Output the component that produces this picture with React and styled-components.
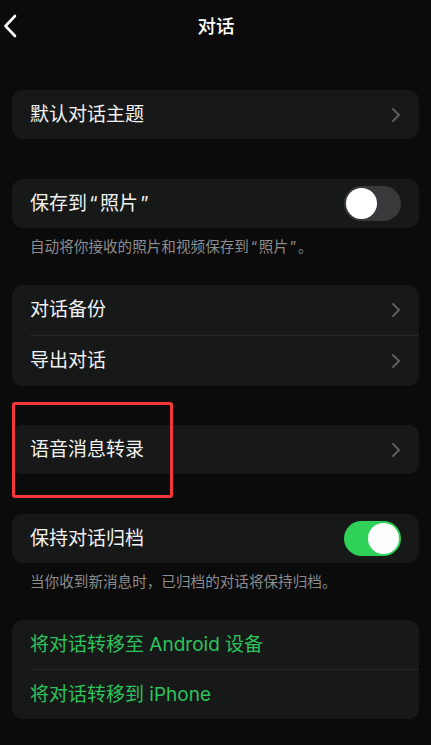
import styled, { createGlobalStyle } from "styled-components";

const GlobalStyle = createGlobalStyle`
  body {
    margin: 0;
    background: #0b0b0b;
    font-family: "Inter", "Noto Sans CJK SC", sans-serif;
    -webkit-font-smoothing: antialiased;
  }
`;

const BackIcon = () => (
  <svg width="14" height="24" viewBox="0 0 14 24" fill="none">
    <path d="M12 2 L2.5 12 L12 22" stroke="#fff" strokeWidth="2.6" strokeLinecap="round" strokeLinejoin="round" />
  </svg>
);

const Chevron = () => (
  <svg width="10" height="16" viewBox="0 0 10 16" fill="none">
    <path d="M2 2 L8 8 L2 14" stroke="#5b5d5f" strokeWidth="2" strokeLinecap="round" strokeLinejoin="round" />
  </svg>
);

export default function App() {
  return (
    <>
      <GlobalStyle />
      <Screen>
        <Header>
          <Back>
            <BackIcon />
          </Back>
          <Title>对话</Title>
        </Header>

        <Card $top={38}>
          <Row>
            <Label>默认对话主题</Label>
            <Chevron />
          </Row>
        </Card>

        <Card $top={40}>
          <Row>
            <Label>
              保存到<Quote>“</Quote>照片<Quote>”</Quote>
            </Label>
            <Toggle />
          </Row>
        </Card>
        <Note>
          自动将你接收的照片和视频保存到<Quote>“</Quote>照片<Quote>”</Quote>。
        </Note>

        <Card $top={28}>
          <Row $tall>
            <Label>对话备份</Label>
            <Chevron />
          </Row>
          <Divider />
          <Row $tall>
            <Label>导出对话</Label>
            <Chevron />
          </Row>
        </Card>

        <Highlighted>
          <Card $top={39}>
            <Row>
              <Label>语音消息转录</Label>
              <Chevron />
            </Row>
          </Card>
          <Marker />
        </Highlighted>

        <Card $top={40}>
          <Row>
            <Label>保持对话归档</Label>
            <Toggle $on />
          </Row>
        </Card>
        <Note>当你收到新消息时，已归档的对话将保持归档。</Note>

        <Card $top={28}>
          <Row>
            <Label $green>将对话转移至 Android 设备</Label>
          </Row>
          <Divider />
          <Row>
            <Label $green>将对话转移到 iPhone</Label>
          </Row>
        </Card>
      </Screen>
    </>
  );
}

const Screen = styled.div`
  width: 431px;
  min-height: 745px;
  box-sizing: border-box;
  padding: 0 12px 26px;
  display: flex;
  flex-direction: column;
`;

const Header = styled.div`
  position: relative;
  height: 52px;
  display: flex;
  align-items: center;
  justify-content: center;
`;

const Back = styled.div`
  position: absolute;
  left: -9px;
  top: 14px;
  display: flex;
`;

const Title = styled.div`
  color: #fff;
  font-size: 18.5px;
  font-weight: 500;
  padding: 0 0 2px 1px;
`;

const Card = styled.div`
  margin-top: ${(p) => p.$top}px;
  background: #171918;
  border-radius: 11px;
  display: flex;
  flex-direction: column;
`;

const Row = styled.div`
  height: ${(p) => (p.$tall ? 50 : 49)}px;
  display: flex;
  align-items: center;
  justify-content: space-between;
  padding: 0 18px;
`;

const Label = styled.span`
  color: ${(p) => (p.$green ? "#2dc25c" : "#f2f2f2")};
  font-size: 19px;
  line-height: 24px;
`;

const Quote = styled.span`
  padding: 0 0.12em;
`;

const Divider = styled.div`
  height: 1px;
  margin-left: 18px;
  background: #262828;
`;

const Note = styled.div`
  padding: 9px 18px 0;
  color: #8b8c8e;
  font-size: 14.6px;
  line-height: 20px;
`;

const Toggle = styled.div`
  position: relative;
  width: 57px;
  height: 35px;
  border-radius: 18px;
  background: ${(p) => (p.$on ? "#30d158" : "#39393c")};

  &::after {
    content: "";
    position: absolute;
    top: 2px;
    left: ${(p) => (p.$on ? "24px" : "2px")};
    width: 31px;
    height: 31px;
    border-radius: 50%;
    background: #fff;
  }
`;

const Highlighted = styled.div`
  position: relative;
`;

const Marker = styled.div`
  position: absolute;
  left: 0;
  top: 16px;
  width: 161px;
  height: 96px;
  box-sizing: border-box;
  border: 3px solid #f2383a;
  border-radius: 3px;
  pointer-events: none;
`;
